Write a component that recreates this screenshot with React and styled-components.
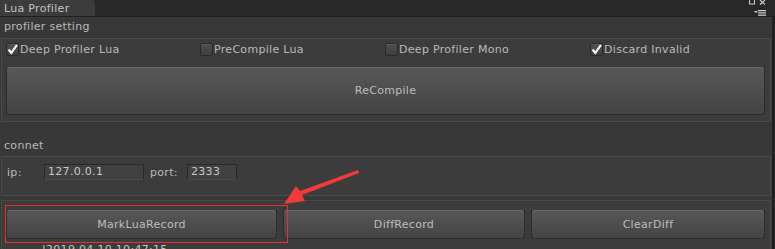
import React from 'react';
import styled, { createGlobalStyle } from 'styled-components';

const GlobalStyle = createGlobalStyle`
  html, body {
    margin: 0;
    padding: 0;
    background: #383838;
  }
  body {
    font-family: "DejaVu Sans", "Liberation Sans", sans-serif;
    font-size: 11px;
    letter-spacing: 0.3px;
    color: #bababa;
  }
`;

const Window = styled.div`
  position: relative;
  display: flex;
  flex-direction: column;
  width: 775px;
  height: 249px;
  overflow: hidden;
  background: #383838;
`;

const TabBar = styled.div`
  display: flex;
  align-items: flex-end;
  justify-content: space-between;
  height: 16px;
  background: #282828;
  border-bottom: 1px solid #1f1f1f;
`;

const Tab = styled.div`
  width: 91px;
  height: 16px;
  padding-left: 4px;
  line-height: 17px;
  background: #3c3c3c;
  border-top-right-radius: 3px;
  color: #c2c2c2;
`;

const TabIcons = styled.svg`
  margin-right: 7px;
  align-self: flex-start;
`;

const Body = styled.div`
  display: flex;
  flex: 1;
  min-height: 0;
`;

const Content = styled.div`
  flex: 1;
  padding-left: 1px;
  padding-right: 1px;
`;

const ScrollStrip = styled.div`
  width: 3px;
  background: #222222;
`;

const SectionLabel = styled.div`
  height: ${(p) => p.$height}px;
  padding-top: ${(p) => p.$top}px;
  padding-left: 3px;
  line-height: 14px;
  box-sizing: border-box;
`;

const Box = styled.div`
  border: 1px solid #4a4a4a;
  background: #3c3c3c;
  padding: ${(p) => p.$pad};
  margin-bottom: ${(p) => p.$gap || 0}px;
`;

const CheckRow = styled.div`
  display: grid;
  grid-template-columns: 194px 185px 205px 1fr;
  height: 20px;
  align-items: center;
`;

const CheckItem = styled.label`
  display: flex;
  align-items: center;
  gap: 1px;
  white-space: nowrap;
`;

const Box13 = styled.span`
  display: flex;
  align-items: center;
  justify-content: center;
  width: 11px;
  height: 11px;
  border: 1px solid #2a2a2a;
  border-radius: 2px;
  background: linear-gradient(#4e4e4e, #3f3f3f);
  box-shadow: inset 0 1px 0 #5a5a5a;
`;

const Button = styled.div`
  display: flex;
  align-items: center;
  justify-content: center;
  box-sizing: border-box;
  height: ${(p) => p.$height}px;
  width: ${(p) => (p.$width ? `${p.$width}px` : 'auto')};
  flex: ${(p) => (p.$width ? 'none' : 1)};
  border: 1px solid #2c2c2c;
  border-top-color: #3a3a3a;
  border-radius: 3px;
  background: linear-gradient(#585858, #444444);
  box-shadow: inset 0 1px 0 #6a6a6a;
  color: #bdbdbd;
`;

const ButtonRow = styled.div`
  display: flex;
  gap: 6px;
`;

const FieldRow = styled.div`
  display: flex;
  align-items: center;
  height: 16px;
`;

const FieldLabel = styled.span`
  width: ${(p) => p.$width}px;
`;

const Input = styled.div`
  box-sizing: border-box;
  width: ${(p) => p.$width}px;
  height: 16px;
  margin-right: 6px;
  padding-left: 3px;
  line-height: 14px;
  border: 1px solid #292929;
  border-bottom-color: #4a4a4a;
  background: #414141;
  color: #c8c8c8;
`;

const LogLine = styled.div`
  padding: 4px 0 0 36px;
  color: #c4c4c4;
`;

const Arrow = styled.svg`
  position: absolute;
  left: 0;
  top: 0;
  pointer-events: none;
`;

const Highlight = styled.div`
  position: absolute;
  left: 5px;
  top: 205px;
  width: 281px;
  height: 36px;
  border: 1px solid #e83030;
  pointer-events: none;
`;

function Tick() {
  return (
    <svg width="11" height="11" viewBox="0 0 11 11">
      <path d="M1.5 5.5 L4.3 9 L10 0.8" stroke="#f2f2f2" strokeWidth="2.2" fill="none" />
    </svg>
  );
}

function Check({ checked, label }) {
  return (
    <CheckItem>
      <Box13>{checked && <Tick />}</Box13>
      {label}
    </CheckItem>
  );
}

export default function App() {
  return (
    <>
      <GlobalStyle />
      <Window>
        <TabBar>
          <Tab>Lua Profiler</Tab>
          <TabIcons width="20" height="16" viewBox="0 0 20 16">
            <rect x="1.5" y="-1" width="5" height="5" stroke="#cfcfcf" fill="none" />
            <path d="M12 0 L17 4.5 M17 0 L12 4.5" stroke="#cfcfcf" strokeWidth="1.1" />
            <path d="M6 11 L10 11 L8 13 Z" fill="#cfcfcf" />
            <rect x="10" y="10" width="8" height="1.2" fill="#cfcfcf" />
            <rect x="10" y="12.3" width="8" height="1.2" fill="#cfcfcf" />
            <rect x="10" y="14.6" width="8" height="1.2" fill="#cfcfcf" />
          </TabIcons>
        </TabBar>
        <Body>
          <Content>
            <SectionLabel $height={21} $top={3}>profiler setting</SectionLabel>
            <Box $pad="0 5px 6px 4px">
              <CheckRow>
                <Check checked label="Deep Profiler Lua" />
                <Check label="PreCompile Lua" />
                <Check label="Deep Profiler Mono" />
                <Check checked label="Discard Invalid" />
              </CheckRow>
              <ButtonRow style={{ marginTop: 7 }}>
                <Button $height={49}>ReCompile</Button>
              </ButtonRow>
            </Box>
            <SectionLabel $height={34} $top={17}>connet</SectionLabel>
            <Box $pad="7px 5px 15px 5px" $gap={4}>
              <FieldRow>
                <FieldLabel $width={37}>ip:</FieldLabel>
                <Input $width={100}>127.0.0.1</Input>
                <FieldLabel $width={37}>port:</FieldLabel>
                <Input $width={50}>2333</Input>
              </FieldRow>
            </Box>
            <Box $pad="8px 5px 0 4px">
              <ButtonRow>
                <Button $height={30} $width={271}>MarkLuaRecord</Button>
                <Button $height={30} $width={242}>DiffRecord</Button>
                <Button $height={30}>ClearDiff</Button>
              </ButtonRow>
              <LogLine>|2019.04.10 10:47:15</LogLine>
            </Box>
          </Content>
          <ScrollStrip />
        </Body>
        <Highlight />
        <Arrow width="775" height="249" viewBox="0 0 775 249">
          <path
            d="M284 204 L296 186 L300 191 L358 170 L359 173 L302 195 L305 201 Z"
            fill="#f23a3a"
          />
        </Arrow>
      </Window>
    </>
  );
}
